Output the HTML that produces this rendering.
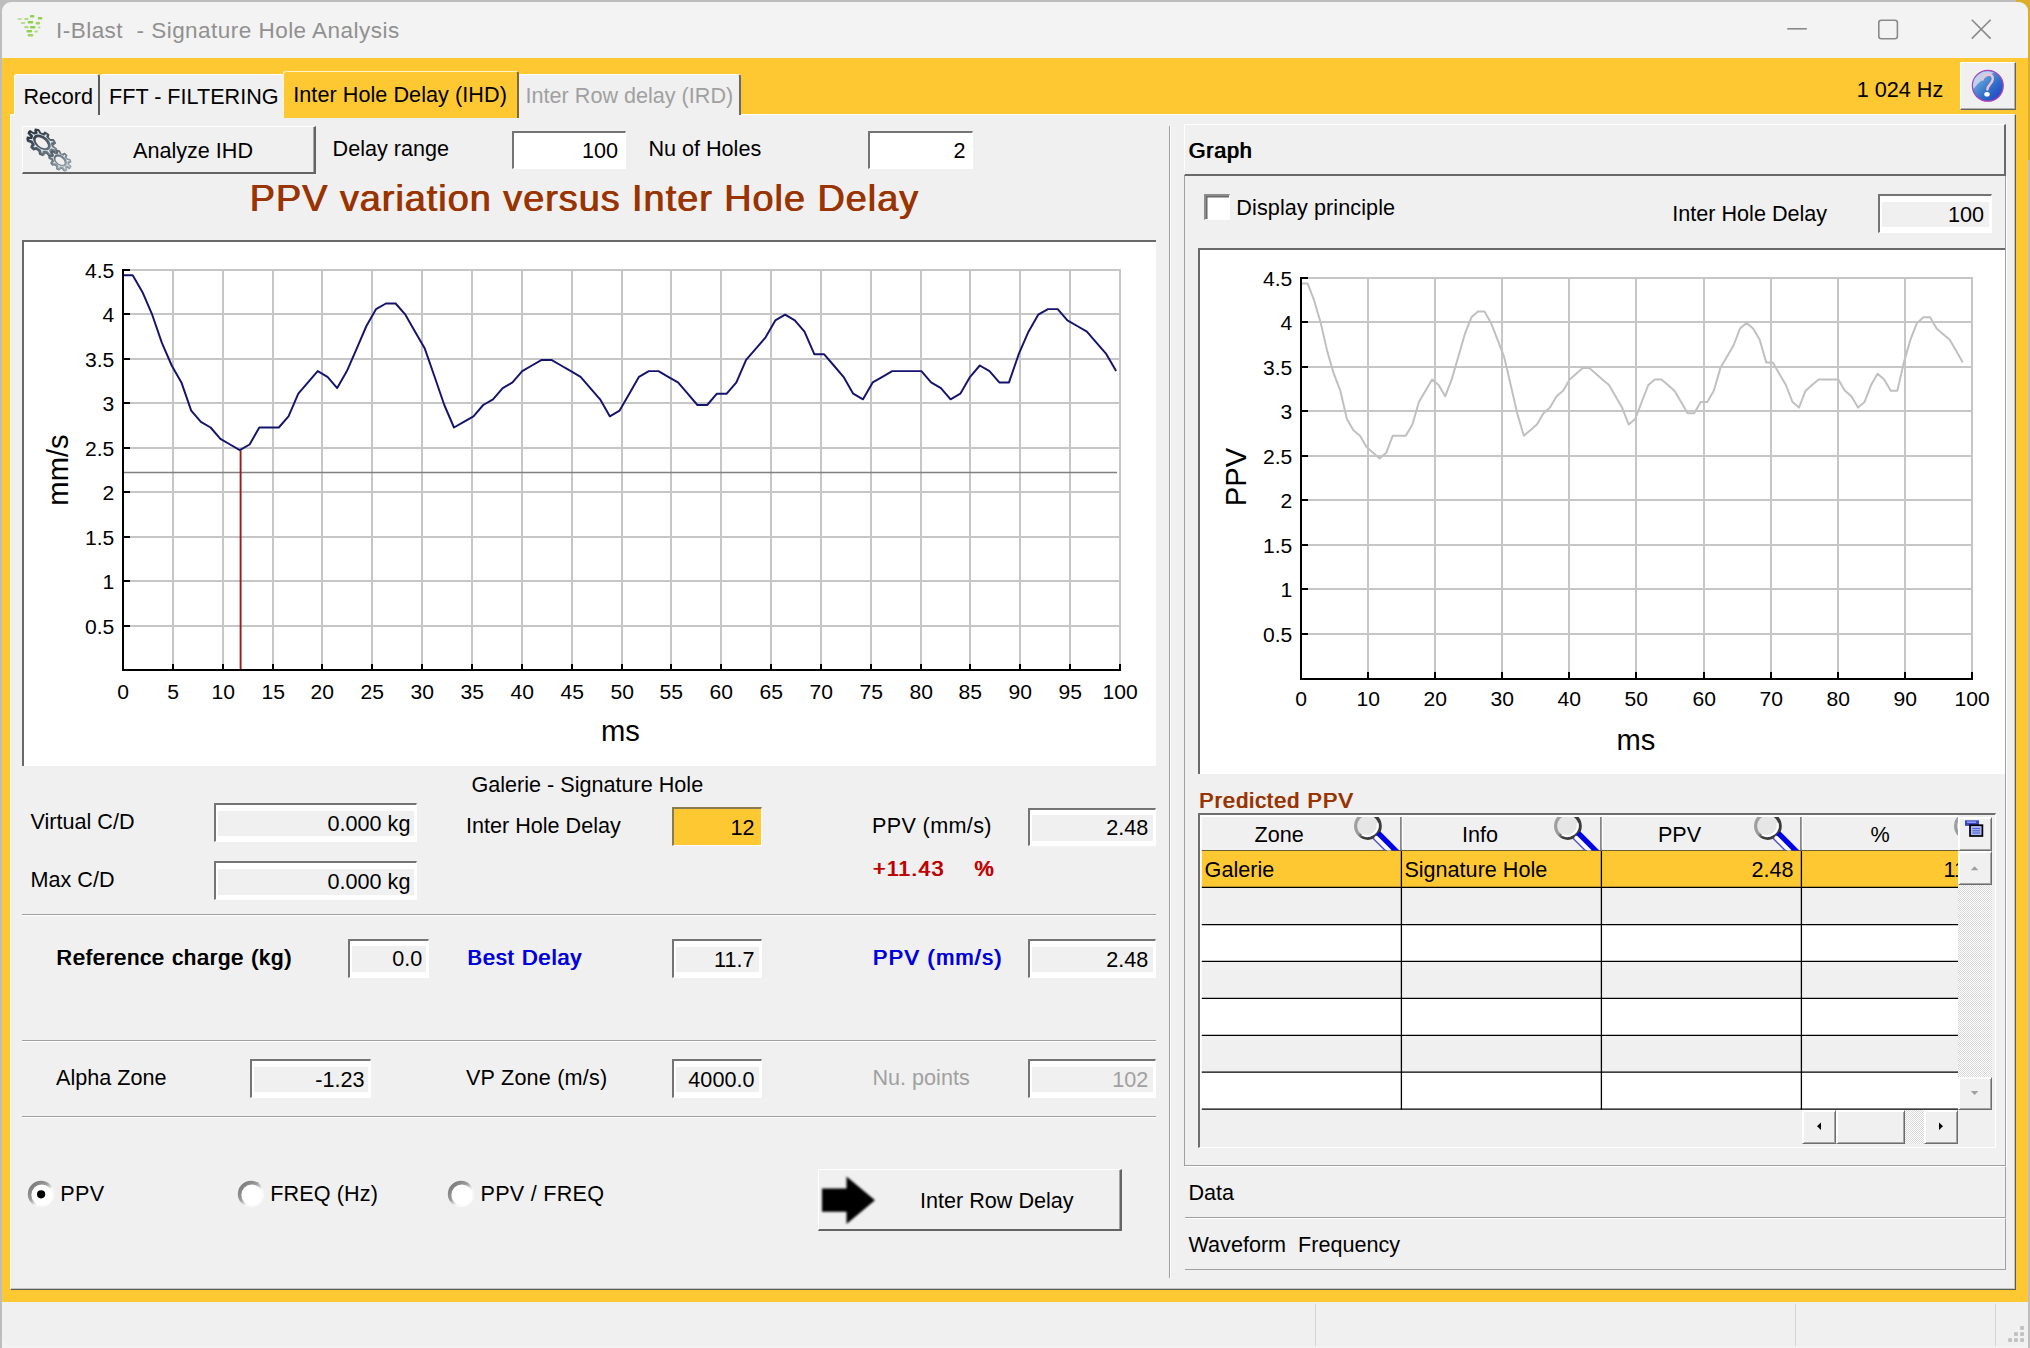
<!DOCTYPE html>
<html>
<head>
<meta charset="utf-8">
<title>I-Blast - Signature Hole Analysis</title>
<style>
*{box-sizing:border-box;margin:0;padding:0}
html,body{width:2030px;height:1348px;overflow:hidden}
body{position:relative;background:#bdbdbd;font-family:"Liberation Sans",sans-serif;font-size:21.6px;color:#000}
.a{position:absolute}
.t{position:absolute;white-space:nowrap;line-height:24px;font-size:21.6px}
.b{font-weight:normal;letter-spacing:1px;text-shadow:1px 0 0 currentColor}
#win{left:2px;top:2px;width:2026px;height:1346px;background:#f3f3f3;border-radius:9px 9px 0 0;overflow:hidden}
.yel{background:#fec832}
.face{background:#f0f0f0}
.inp{position:absolute;background:#fff;border:solid #fff;border-width:2px 1px 1px 2px;border-top-color:#747474;border-left-color:#747474;font-size:21.6px;white-space:nowrap}
.inp span{position:absolute;display:block;left:2px;right:2px;height:25.6px;line-height:25.6px;text-align:right;background:#f0f0f0}
.btn{position:absolute;background:#f0f0f0;border:solid;border-width:1px 2px 2px 1px;border-color:#fff #646464 #646464 #fff;box-shadow:inset -1px 0 0 #a6a6a6}
.hl{position:absolute;height:2px;border-top:1px solid #a0a0a0;border-bottom:1px solid #fff}
</style>
</head>
<body>
<div class="a" style="left:2016px;top:0;width:14px;height:160px;background:#dcae2c"></div>
<div id="win" class="a"></div>
<!-- yellow frame -->
<div class="a yel" style="left:2px;top:58px;width:2026px;height:1244px"></div>
<!-- status bar -->
<div class="a face" style="left:2px;top:1302px;width:2026px;height:44px;border-radius:0 0 9px 9px"></div>
<!-- main panel -->
<div class="a face" id="panel" style="left:10px;top:114px;width:2006px;height:1176px;border:1px solid;border-color:#fff #5e5e50 #5e5e50 #fff;box-shadow:inset -1px -1px 0 #c4c4c4"></div>
<!-- title bar -->
<svg class="a" style="left:14px;top:12px" width="34" height="30" viewBox="0 0 30 30" preserveAspectRatio="none">
<g fill="#8fd14f">
<rect x="3" y="6" width="4" height="2" rx="1" opacity=".55"/><rect x="9" y="6" width="4" height="2" rx="1" opacity=".7"/><rect x="14" y="3" width="4" height="2.4" rx="1"/><rect x="21" y="5" width="4" height="2.4" rx="1"/>
<rect x="6" y="10" width="4" height="2" rx="1" opacity=".6"/><rect x="12" y="9" width="5" height="2.6" rx="1"/><rect x="19" y="10" width="4" height="2.4" rx="1" opacity=".9"/>
<rect x="9" y="14" width="4" height="2.2" rx="1" opacity=".7"/><rect x="14" y="14" width="5" height="2.6" rx="1"/><rect x="21" y="14.5" width="2.5" height="2" rx="1" opacity=".6"/>
<rect x="11" y="18" width="5" height="2.6" rx="1"/><rect x="18" y="18.5" width="3" height="2" rx="1" opacity=".7"/>
<rect x="12" y="22" width="5" height="2.6" rx="1" opacity=".9"/>
</g></svg>
<div class="t" style="left:56px;top:19.4px;font-size:22.5px;letter-spacing:.47px;color:#909090;white-space:pre">I-Blast  - Signature Hole Analysis</div>
<svg class="a" style="left:1780px;top:12px" width="230" height="36" viewBox="0 0 230 36" fill="none" stroke="#8a8a8a" stroke-width="1.6">
<path d="M7.2 16.8H26.8"/>
<rect x="98.8" y="8.2" width="18.6" height="18.6" rx="2.5"/>
<path d="M191.8 7.8L210.6 26.6M210.6 7.8L191.8 26.6"/>
</svg>
<!-- tabs -->
<div class="a face" style="left:14px;top:74px;width:86px;height:41px;border-left:1px solid #fff;border-top:1px solid #fff;border-right:2px solid #5c5c5c;border-radius:3px 3px 0 0"></div>
<div class="a face" style="left:100px;top:74px;width:184px;height:41px;border-top:1px solid #fff;border-radius:3px 3px 0 0"></div>
<div class="a face" style="left:519px;top:74px;width:222px;height:41px;border-top:1px solid #fff;border-right:2px solid #6a6a6a;border-radius:0 3px 0 0"></div>
<div class="a yel" style="left:283px;top:71px;width:236px;height:47px;border-left:1px solid #fff3c8;border-top:1px solid #fff3c8;border-right:2px solid #7d6a3a;border-radius:3px 3px 0 0"></div>
<div class="t" style="left:23.4px;top:84.5px">Record</div>
<div class="t" style="left:109px;top:84.5px">FFT - FILTERING</div>
<div class="t" style="left:293.2px;top:83px;letter-spacing:.06px">Inter Hole Delay (IHD)</div>
<div class="t" style="left:525.6px;top:84.2px;color:#a0a0a0">Inter Row delay (IRD)</div>
<div class="t" style="left:1856.8px;top:78.2px">1 024 Hz</div>
<!-- help button -->
<div class="btn" style="left:1960px;top:62px;width:55.6px;height:47.6px;border-width:1px 1.4px 1.4px 1px;box-shadow:inset -1px -1px 0 #b0b0b0"></div>
<!-- toolbar -->
<div class="btn" style="left:22px;top:126px;width:294px;height:48px"></div>
<svg class="a" style="left:24px;top:128px" width="52" height="44" viewBox="24 128 52 44">
<defs><filter id="gb" x="-10%" y="-10%" width="120%" height="120%"><feGaussianBlur stdDeviation="0.45"/></filter>
<linearGradient id="gs1" x1="0" y1="0" x2="1" y2="1"><stop offset="0" stop-color="#1e2630"/><stop offset=".5" stop-color="#4a545e"/><stop offset="1" stop-color="#8f9aa4"/></linearGradient>
<linearGradient id="gs2" x1="0" y1="0" x2="1" y2="1"><stop offset="0" stop-color="#3a444e"/><stop offset=".5" stop-color="#7a858f"/><stop offset="1" stop-color="#b4bec6"/></linearGradient></defs>
<g filter="url(#gb)">
<g transform="translate(41.2 143.4) rotate(38) scale(1.62 1.0) rotate(-38)"><path d="M7.45 1.51 L9.60 2.80 L8.81 4.73 L6.37 4.15 L4.74 5.94 L5.55 8.32 L3.70 9.29 L2.21 7.27 L-0.19 7.60 L-1.09 9.94 L-3.13 9.50 L-2.98 6.99 L-5.03 5.70 L-7.22 6.91 L-8.50 5.26 L-6.78 3.44 L-7.52 1.13 L-9.98 0.65 L-9.90 -1.44 L-7.40 -1.72 L-6.48 -3.97 L-8.06 -5.91 L-6.66 -7.46 L-4.57 -6.07 L-2.42 -7.21 L-2.38 -9.71 L-0.30 -10.00 L0.41 -7.59 L2.78 -7.07 L4.42 -8.97 L6.19 -7.85 L5.19 -5.55 L6.68 -3.63 L9.15 -4.03 L9.79 -2.03 L7.54 -0.92Z M5.40 0.00 A5.4 5.4 0 1 0 -5.40 0.00 A5.4 5.4 0 1 0 5.40 0.00Z" fill="#5d6872" stroke="#4a545e" stroke-width="1.2" fill-rule="evenodd" stroke-linejoin="round"/></g>
<g transform="translate(42 142.4) rotate(38) scale(1.62 1.0) rotate(-38)"><path d="M7.45 1.51 L9.60 2.80 L8.81 4.73 L6.37 4.15 L4.74 5.94 L5.55 8.32 L3.70 9.29 L2.21 7.27 L-0.19 7.60 L-1.09 9.94 L-3.13 9.50 L-2.98 6.99 L-5.03 5.70 L-7.22 6.91 L-8.50 5.26 L-6.78 3.44 L-7.52 1.13 L-9.98 0.65 L-9.90 -1.44 L-7.40 -1.72 L-6.48 -3.97 L-8.06 -5.91 L-6.66 -7.46 L-4.57 -6.07 L-2.42 -7.21 L-2.38 -9.71 L-0.30 -10.00 L0.41 -7.59 L2.78 -7.07 L4.42 -8.97 L6.19 -7.85 L5.19 -5.55 L6.68 -3.63 L9.15 -4.03 L9.79 -2.03 L7.54 -0.92Z M5.40 0.00 A5.4 5.4 0 1 0 -5.40 0.00 A5.4 5.4 0 1 0 5.40 0.00Z" fill="#dcebf4" stroke="url(#gs1)" stroke-width="1.7" fill-rule="evenodd" stroke-linejoin="round"/></g>
<g transform="translate(59.6 161.2) rotate(38) scale(1.2 0.8) rotate(-30)"><path d="M7.45 1.51 L9.60 2.80 L8.81 4.73 L6.37 4.15 L4.74 5.94 L5.55 8.32 L3.70 9.29 L2.21 7.27 L-0.19 7.60 L-1.09 9.94 L-3.13 9.50 L-2.98 6.99 L-5.03 5.70 L-7.22 6.91 L-8.50 5.26 L-6.78 3.44 L-7.52 1.13 L-9.98 0.65 L-9.90 -1.44 L-7.40 -1.72 L-6.48 -3.97 L-8.06 -5.91 L-6.66 -7.46 L-4.57 -6.07 L-2.42 -7.21 L-2.38 -9.71 L-0.30 -10.00 L0.41 -7.59 L2.78 -7.07 L4.42 -8.97 L6.19 -7.85 L5.19 -5.55 L6.68 -3.63 L9.15 -4.03 L9.79 -2.03 L7.54 -0.92Z M5.40 0.00 A5.4 5.4 0 1 0 -5.40 0.00 A5.4 5.4 0 1 0 5.40 0.00Z" fill="#7f8a94" stroke="#78838d" stroke-width="1.2" fill-rule="evenodd" stroke-linejoin="round"/></g>
<g transform="translate(60.3 160.4) rotate(38) scale(1.2 0.8) rotate(-30)"><path d="M7.45 1.51 L9.60 2.80 L8.81 4.73 L6.37 4.15 L4.74 5.94 L5.55 8.32 L3.70 9.29 L2.21 7.27 L-0.19 7.60 L-1.09 9.94 L-3.13 9.50 L-2.98 6.99 L-5.03 5.70 L-7.22 6.91 L-8.50 5.26 L-6.78 3.44 L-7.52 1.13 L-9.98 0.65 L-9.90 -1.44 L-7.40 -1.72 L-6.48 -3.97 L-8.06 -5.91 L-6.66 -7.46 L-4.57 -6.07 L-2.42 -7.21 L-2.38 -9.71 L-0.30 -10.00 L0.41 -7.59 L2.78 -7.07 L4.42 -8.97 L6.19 -7.85 L5.19 -5.55 L6.68 -3.63 L9.15 -4.03 L9.79 -2.03 L7.54 -0.92Z M5.40 0.00 A5.4 5.4 0 1 0 -5.40 0.00 A5.4 5.4 0 1 0 5.40 0.00Z" fill="#e6eff5" stroke="url(#gs2)" stroke-width="1.7" fill-rule="evenodd" stroke-linejoin="round"/></g>
</g>
</svg>
<div class="t " style="left:133px;top:138.8px;">Analyze IHD</div>
<div class="t " style="left:332.6px;top:136.9px;">Delay range</div>
<div class="inp" style="left:512px;top:131px;width:114px;height:38px;"><span style="top:4.7px;padding-right:5.0px;background:none;">100</span></div>
<div class="t " style="left:648.4px;top:136.9px;">Nu of Holes</div>
<div class="inp" style="left:868px;top:131px;width:105px;height:38px;"><span style="top:4.7px;padding-right:4.5px;background:none;">2</span></div>
<div class="t b" style="left:249.3px;top:176.3px;font-size:37.8px;line-height:44px;letter-spacing:1px;color:#993300">PPV variation versus Inter Hole Delay</div>
<!-- left chart -->
<div class="a" style="left:22px;top:240px;width:1134px;height:526px;background:#fff;border-top:2px solid #696969;border-left:2px solid #696969"></div>
<svg class="a" style="left:0;top:0" width="1170" height="780" viewBox="0 0 1170 780" font-family="Liberation Sans, sans-serif" font-size="21.1">
<path d="M173 269V669M223 269V669M273 269V669M322 269V669M372 269V669M422 269V669M472 269V669M522 269V669M572 269V669M622 269V669M671 269V669M721 269V669M771 269V669M821 269V669M871 269V669M921 269V669M970 269V669M1020 269V669M1070 269V669M1120 269V669M124 626H1121M124 581H1121M124 537H1121M124 492H1121M124 448H1121M124 403H1121M124 359H1121M124 314H1121M124 270H1121" stroke="#c6c6c6" stroke-width="2" fill="none" shape-rendering="crispEdges"/>
<path d="M124 472.5H1117" stroke="#808080" stroke-width="1.5"/>
<path d="M240.6 450.5V669" stroke="#9a1c1c" stroke-width="1.9"/>
<polyline points="123.0,275.3 132.7,275.3 142.5,292.2 152.2,314.7 161.9,342.9 171.7,365.5 181.4,382.4 191.2,410.6 200.9,421.9 210.6,427.5 220.4,438.8 230.1,444.5 239.8,450.1 249.6,444.5 259.3,427.5 269.0,427.5 278.8,427.5 288.5,416.3 298.3,393.7 308.0,382.4 317.7,371.1 327.5,376.8 337.2,388.1 346.9,371.1 356.7,348.6 366.4,326.0 376.1,309.1 385.9,303.5 395.6,303.5 405.4,314.7 415.1,331.7 424.8,348.6 434.6,376.8 444.3,405.0 454.0,427.5 463.8,421.9 473.5,416.3 483.2,405.0 493.0,399.3 502.7,388.1 512.5,382.4 522.2,371.1 531.9,365.5 541.7,359.9 551.4,359.9 561.1,365.5 570.9,371.1 580.6,376.8 590.3,388.1 600.1,399.3 609.8,416.3 619.6,410.6 629.3,393.7 639.0,376.8 648.8,371.1 658.5,371.1 668.2,376.8 678.0,382.4 687.7,393.7 697.4,405.0 707.2,405.0 716.9,393.7 726.7,393.7 736.4,382.4 746.1,359.9 755.9,348.6 765.6,337.3 775.3,320.4 785.1,314.7 794.8,320.4 804.5,331.7 814.3,354.2 824.0,354.2 833.8,365.5 843.5,376.8 853.2,393.7 863.0,399.3 872.7,382.4 882.4,376.8 892.2,371.1 901.9,371.1 911.6,371.1 921.4,371.1 931.1,382.4 940.9,388.1 950.6,399.3 960.3,393.7 970.1,376.8 979.8,365.5 989.5,371.1 999.3,382.4 1009.0,382.4 1018.7,354.2 1028.5,331.7 1038.2,314.7 1048.0,309.1 1057.7,309.1 1067.4,320.4 1077.2,326.0 1086.9,331.7 1096.6,342.9 1106.4,354.2 1116.1,371.1" fill="none" stroke="#14146e" stroke-width="1.95" stroke-linejoin="round"/>
<path d="M123 269V671M122 670H1121M1120 664V669" stroke="#000" stroke-width="2" fill="none" shape-rendering="crispEdges"/>
<path d="M173 664V669M223 664V669M273 664V669M322 664V669M372 664V669M422 664V669M472 664V669M522 664V669M572 664V669M622 664V669M671 664V669M721 664V669M771 664V669M821 664V669M871 664V669M921 664V669M970 664V669M1020 664V669M1070 664V669M1120 664V669M124 626H130M124 581H130M124 537H130M124 492H130M124 448H130M124 403H130M124 359H130M124 314H130M124 270H130" stroke="#000" stroke-width="2" fill="none" shape-rendering="crispEdges"/>
<g text-anchor="middle"><text x="123.2" y="698.8">0</text><text x="173.2" y="698.8">5</text><text x="223.2" y="698.8">10</text><text x="273.2" y="698.8">15</text><text x="322.2" y="698.8">20</text><text x="372.2" y="698.8">25</text><text x="422.2" y="698.8">30</text><text x="472.2" y="698.8">35</text><text x="522.2" y="698.8">40</text><text x="572.2" y="698.8">45</text><text x="622.2" y="698.8">50</text><text x="671.2" y="698.8">55</text><text x="721.2" y="698.8">60</text><text x="771.2" y="698.8">65</text><text x="821.2" y="698.8">70</text><text x="871.2" y="698.8">75</text><text x="921.2" y="698.8">80</text><text x="970.2" y="698.8">85</text><text x="1020.2" y="698.8">90</text><text x="1070.2" y="698.8">95</text><text x="1120.2" y="698.8">100</text></g>
<g text-anchor="end"><text x="114.3" y="633.6">0.5</text><text x="114.3" y="588.6">1</text><text x="114.3" y="544.6">1.5</text><text x="114.3" y="499.6">2</text><text x="114.3" y="455.6">2.5</text><text x="114.3" y="410.6">3</text><text x="114.3" y="366.6">3.5</text><text x="114.3" y="321.6">4</text><text x="114.3" y="277.6">4.5</text></g>
<text x="620.5" y="741" font-size="29.2" text-anchor="middle">ms</text>
<text transform="translate(67.6 470) rotate(-90)" font-size="29.2" text-anchor="middle">mm/s</text>
</svg>
<!-- left form -->
<div class="t " style="left:471.5px;top:772.7px;">Galerie - Signature Hole</div>
<div class="t " style="left:30.5px;top:809.7px;">Virtual C/D</div>
<div class="inp" style="left:214px;top:803px;width:203px;height:39px;"><span style="top:5.9px;padding-right:3.6px;">0.000 kg</span></div>
<div class="t " style="left:30.5px;top:867.6px;">Max C/D</div>
<div class="inp" style="left:214px;top:861px;width:203px;height:39px;"><span style="top:6.1px;padding-right:3.6px;">0.000 kg</span></div>
<div class="t " style="left:466px;top:813.6px;">Inter Hole Delay</div>
<div class="inp" style="left:672px;top:807px;width:90px;height:39px;background:#fec832;border-top-color:#8a7a50;border-left-color:#8a7a50"><span style="top:6.3px;padding-right:4.4px;background:none;">12</span></div>
<div class="t " style="left:872px;top:814.1px;letter-spacing:.35px">PPV (mm/s)</div>
<div class="inp" style="left:1028px;top:808px;width:128px;height:38px;"><span style="top:5.3px;padding-right:4.7px;">2.48</span></div>
<div class="t b" style="left:872.5px;top:856.7px;color:#c00000;letter-spacing:1.1px">+11.43</div>
<div class="t b" style="left:974px;top:856.7px;color:#c00000">%</div>
<div class="hl" style="left:22px;top:914px;width:1134px"></div>
<div class="t b" style="left:56px;top:945.9px;letter-spacing:1px">Reference charge (kg)</div>
<div class="inp" style="left:348px;top:939px;width:81px;height:39px;"><span style="top:5.2px;padding-right:3.7px;">0.0</span></div>
<div class="t b" style="left:467px;top:945.9px;color:#0000dc;letter-spacing:1.05px">Best Delay</div>
<div class="inp" style="left:672px;top:939px;width:90px;height:39px;"><span style="top:5.5px;padding-right:4.6px;">11.7</span></div>
<div class="t b" style="left:872.5px;top:946.0px;color:#0000dc;letter-spacing:1.35px">PPV (mm/s)</div>
<div class="inp" style="left:1028px;top:939px;width:128px;height:39px;"><span style="top:5.5px;padding-right:4.7px;">2.48</span></div>
<div class="hl" style="left:22px;top:1040px;width:1134px"></div>
<div class="t " style="left:56px;top:1065.8px;">Alpha Zone</div>
<div class="inp" style="left:250px;top:1059px;width:121px;height:39px;"><span style="top:5.9px;padding-right:3.6px;">-1.23</span></div>
<div class="t " style="left:466px;top:1065.8px;letter-spacing:.2px">VP Zone (m/s)</div>
<div class="inp" style="left:672px;top:1059px;width:90px;height:39px;"><span style="top:5.5px;padding-right:4.6px;">4000.0</span></div>
<div class="t " style="left:872.5px;top:1065.6px;color:#a0a0a0">Nu. points</div>
<div class="inp" style="left:1028px;top:1059px;width:128px;height:39px;"><span style="top:5.5px;padding-right:4.7px;color:#a0a0a0">102</span></div>
<div class="hl" style="left:22px;top:1116px;width:1134px"></div>
<svg class="a" style="left:27.2px;top:1179.8px" width="28" height="28" viewBox="0 0 28 28"><defs><linearGradient id="rg41" x1="0" y1="0" x2="1" y2="1"><stop offset="0" stop-color="#6a6a6a"/><stop offset=".42" stop-color="#9c9c9c"/><stop offset=".6" stop-color="#f6f6f6"/><stop offset="1" stop-color="#fff"/></linearGradient></defs><circle cx="14" cy="14" r="13.2" fill="url(#rg41)"/><circle cx="14.8" cy="14.9" r="10.4" fill="#fff"/><circle cx="14.1" cy="14.3" r="4.1" fill="#000"/></svg>
<svg class="a" style="left:237.3px;top:1179.8px" width="28" height="28" viewBox="0 0 28 28"><defs><linearGradient id="rg251" x1="0" y1="0" x2="1" y2="1"><stop offset="0" stop-color="#6a6a6a"/><stop offset=".42" stop-color="#9c9c9c"/><stop offset=".6" stop-color="#f6f6f6"/><stop offset="1" stop-color="#fff"/></linearGradient></defs><circle cx="14" cy="14" r="13.2" fill="url(#rg251)"/><circle cx="14.8" cy="14.9" r="10.4" fill="#fff"/></svg>
<svg class="a" style="left:447.0px;top:1179.8px" width="28" height="28" viewBox="0 0 28 28"><defs><linearGradient id="rg461" x1="0" y1="0" x2="1" y2="1"><stop offset="0" stop-color="#6a6a6a"/><stop offset=".42" stop-color="#9c9c9c"/><stop offset=".6" stop-color="#f6f6f6"/><stop offset="1" stop-color="#fff"/></linearGradient></defs><circle cx="14" cy="14" r="13.2" fill="url(#rg461)"/><circle cx="14.8" cy="14.9" r="10.4" fill="#fff"/></svg>
<div class="t " style="left:60.3px;top:1181.8px;letter-spacing:.3px">PPV</div>
<div class="t " style="left:270.3px;top:1181.8px;letter-spacing:.1px">FREQ (Hz)</div>
<div class="t " style="left:480.5px;top:1181.8px;letter-spacing:.25px">PPV / FREQ</div>
<div class="btn" style="left:818px;top:1168.6px;width:304.3px;height:62px"></div>
<svg class="a" style="left:818px;top:1170px" width="62" height="60" viewBox="818 1170 62 60"><defs><filter id="bl"><feGaussianBlur stdDeviation="0.8"/></filter></defs><path d="M822 1188.4H846.5V1176.4L875 1200.2L846.5 1224V1211.8H822Z" fill="#000" filter="url(#bl)"/></svg>
<div class="t " style="left:920px;top:1188.5px;">Inter Row Delay</div>
<div class="a" style="left:1169px;top:126px;width:2px;height:1152px;border-left:1px solid #a0a0a0;border-right:1px solid #fff"></div>
<svg class="a" style="left:1968px;top:66px" width="40" height="40" viewBox="1968 66 40 40">
<defs><linearGradient id="hg" x1="0" y1="0" x2="1" y2="1"><stop offset="0" stop-color="#9cc0e8"/><stop offset=".42" stop-color="#4a8ad2"/><stop offset=".6" stop-color="#2f6cc8"/><stop offset="1" stop-color="#2238c4"/></linearGradient>
<filter id="hb"><feGaussianBlur stdDeviation="0.5"/></filter></defs>
<g filter="url(#hb)">
<circle cx="1987.8" cy="85.8" r="15.4" fill="url(#hg)" stroke="#b040b8" stroke-width="1.3"/>
<path d="M1973.4 89A14.6 14.6 0 0 1 1994 72.8Q1982 78 1973.4 89Z" fill="#cfe0f4" opacity=".8"/>
<path d="M1982.6 79.6Q1983.2 74.6 1988 74.4Q1993 74.6 1992.8 79Q1992.6 82 1989.6 84.8Q1987.4 87 1987.4 89.6" fill="none" stroke="#ecc4d2" stroke-width="2.5" stroke-linecap="round"/>
<ellipse cx="1987" cy="94.2" rx="2.7" ry="2.3" fill="#fff"/>
</g>
</svg>
<div class="a" style="left:1184px;top:124px;width:822px;height:52px;border:solid;border-width:1px 2px 2px 1px;border-color:#fff #696969 #696969 #fff"></div>
<div class="t b" style="left:1188.2px;top:138.9px;letter-spacing:.75px">Graph</div>
<div class="a" style="left:1184px;top:176px;width:822px;height:990px;border:1px solid #a0a0a0;border-top:none;box-shadow:1px 1px 0 #fff"></div>
<div class="a" style="left:1204px;top:194px;width:26px;height:26px;background:#fff;border:solid;border-width:2px 1px 1px 2px;border-color:#8c8c8c #fff #fff #8c8c8c;box-shadow:inset 1.5px 1.5px 0 #696969"></div>
<div class="t " style="left:1236.3px;top:195.6px;letter-spacing:.1px">Display principle</div>
<div class="t " style="left:1672.3px;top:201.5px;">Inter Hole Delay</div>
<div class="inp" style="left:1878px;top:194px;width:114px;height:39px;"><span style="top:5.7px;padding-right:5.0px;">100</span></div>
<div class="a" style="left:1198px;top:248px;width:806.5px;height:526px;background:#fff;border-top:2px solid #696969;border-left:2px solid #696969"></div>
<svg class="a" style="left:1190px;top:240px" width="820" height="540" viewBox="1190 240 820 540" font-family="Liberation Sans, sans-serif" font-size="21.1">
<path d="M1368 277V678M1435 277V678M1502 277V678M1569 277V678M1636 277V678M1704 277V678M1771 277V678M1838 277V678M1905 277V678M1972 277V678M1302 634H1973M1302 589H1973M1302 545H1973M1302 500H1973M1302 456H1973M1302 411H1973M1302 367H1973M1302 322H1973M1302 278H1973" stroke="#c6c6c6" stroke-width="2" fill="none" shape-rendering="crispEdges"/>
<polyline points="1301.0,283.4 1307.6,283.4 1314.1,300.3 1320.7,322.9 1327.2,351.1 1333.8,373.7 1340.3,390.7 1346.9,418.9 1353.4,430.2 1360.0,435.8 1366.5,447.1 1373.1,452.8 1379.6,458.4 1386.2,452.8 1392.7,435.8 1399.3,435.8 1405.8,435.8 1412.4,424.5 1418.9,402.0 1425.5,390.7 1432.1,379.4 1438.6,385.0 1445.2,396.3 1451.7,379.4 1458.3,356.8 1464.8,334.2 1471.4,317.3 1477.9,311.6 1484.5,311.6 1491.0,322.9 1497.6,339.8 1504.1,356.8 1510.7,385.0 1517.2,413.3 1523.8,435.8 1530.3,430.2 1536.9,424.5 1543.5,413.3 1550.0,407.6 1556.6,396.3 1563.1,390.7 1569.7,379.4 1576.2,373.7 1582.8,368.1 1589.3,368.1 1595.9,373.7 1602.4,379.4 1609.0,385.0 1615.5,396.3 1622.1,407.6 1628.6,424.5 1635.2,418.9 1641.7,402.0 1648.3,385.0 1654.8,379.4 1661.4,379.4 1668.0,385.0 1674.5,390.7 1681.1,402.0 1687.6,413.3 1694.2,413.3 1700.7,402.0 1707.3,402.0 1713.8,390.7 1720.4,368.1 1726.9,356.8 1733.5,345.5 1740.0,328.5 1746.6,322.9 1753.1,328.5 1759.7,339.8 1766.2,362.4 1772.8,362.4 1779.3,373.7 1785.9,385.0 1792.5,402.0 1799.0,407.6 1805.6,390.7 1812.1,385.0 1818.7,379.4 1825.2,379.4 1831.8,379.4 1838.3,379.4 1844.9,390.7 1851.4,396.3 1858.0,407.6 1864.5,402.0 1871.1,385.0 1877.6,373.7 1884.2,379.4 1890.7,390.7 1897.3,390.7 1903.9,362.4 1910.4,339.8 1917.0,322.9 1923.5,317.3 1930.1,317.3 1936.6,328.5 1943.2,334.2 1949.7,339.8 1956.3,351.1 1962.8,362.4" fill="none" stroke="#c0c0c0" stroke-width="2" stroke-linejoin="round"/>
<path d="M1301 277V680M1300 679H1973M1972 672V678" stroke="#000" stroke-width="2" fill="none" shape-rendering="crispEdges"/>
<path d="M1368 672V678M1435 672V678M1502 672V678M1569 672V678M1636 672V678M1704 672V678M1771 672V678M1838 672V678M1905 672V678M1972 672V678M1302 634H1308M1302 589H1308M1302 545H1308M1302 500H1308M1302 456H1308M1302 411H1308M1302 367H1308M1302 322H1308M1302 278H1308" stroke="#000" stroke-width="2" fill="none" shape-rendering="crispEdges"/>
<g text-anchor="middle"><text x="1301.2" y="706.4">0</text><text x="1368.2" y="706.4">10</text><text x="1435.2" y="706.4">20</text><text x="1502.2" y="706.4">30</text><text x="1569.2" y="706.4">40</text><text x="1636.2" y="706.4">50</text><text x="1704.2" y="706.4">60</text><text x="1771.2" y="706.4">70</text><text x="1838.2" y="706.4">80</text><text x="1905.2" y="706.4">90</text><text x="1972.2" y="706.4">100</text></g>
<g text-anchor="end"><text x="1292.3" y="641.6">0.5</text><text x="1292.3" y="596.6">1</text><text x="1292.3" y="552.6">1.5</text><text x="1292.3" y="507.6">2</text><text x="1292.3" y="463.6">2.5</text><text x="1292.3" y="418.6">3</text><text x="1292.3" y="374.6">3.5</text><text x="1292.3" y="329.6">4</text><text x="1292.3" y="285.6">4.5</text></g>
<text x="1636" y="749.5" font-size="29.2" text-anchor="middle">ms</text>
<text transform="translate(1246 477) rotate(-90)" font-size="29.2" text-anchor="middle">PPV</text>
</svg>
<div class="t b" style="left:1198.8px;top:788.8px;color:#993300;letter-spacing:1.1px">Predicted PPV</div>
<div class="a" style="left:1198px;top:813px;width:798px;height:335px;border:solid;border-width:2px 1px 1px 2px;border-color:#6e6e6e #fff #fff #6e6e6e"></div>
<div class="a" style="left:1200px;top:815px;width:758px;height:36px;border-top:2px solid #fff;border-bottom:1.3px solid #6b6030"></div>
<svg class="a" style="left:1200px;top:815px" width="800" height="335" viewBox="1200 815 800 335" font-family="Liberation Sans, sans-serif" font-size="21.6">
<rect x="1200" y="851" width="758" height="36.4" fill="#fec832"/><rect x="1200" y="887.4" width="758" height="37.2" fill="#f0f0f0"/><rect x="1200" y="924.6" width="758" height="36.8" fill="#fff"/><rect x="1200" y="961.4" width="758" height="37.0" fill="#f0f0f0"/><rect x="1200" y="998.4" width="758" height="36.9" fill="#fff"/><rect x="1200" y="1035.3" width="758" height="36.9" fill="#f0f0f0"/><rect x="1200" y="1072.2" width="758" height="37.0" fill="#fff"/><path d="M1200 887.4H1958" stroke="#000" stroke-width="1.2"/><path d="M1200 924.6H1958" stroke="#000" stroke-width="1.2"/><path d="M1200 961.4H1958" stroke="#000" stroke-width="1.2"/><path d="M1200 998.4H1958" stroke="#000" stroke-width="1.2"/><path d="M1200 1035.3H1958" stroke="#000" stroke-width="1.2"/><path d="M1200 1072.2H1958" stroke="#000" stroke-width="1.2"/><path d="M1200 1109.2H1958" stroke="#000" stroke-width="1.2"/><path d="M1401 817V850" stroke="#6e6e6e" stroke-width="1.6"/><path d="M1402.4 817V849" stroke="#fff" stroke-width="1.2"/><path d="M1401.4 851V1109.6" stroke="#000" stroke-width="1.3"/><path d="M1601 817V850" stroke="#6e6e6e" stroke-width="1.6"/><path d="M1602.4 817V849" stroke="#fff" stroke-width="1.2"/><path d="M1601.4 851V1109.6" stroke="#000" stroke-width="1.3"/><path d="M1801 817V850" stroke="#6e6e6e" stroke-width="1.6"/><path d="M1802.4 817V849" stroke="#fff" stroke-width="1.2"/><path d="M1801.4 851V1109.6" stroke="#000" stroke-width="1.3"/><defs><clipPath id="hc"><rect x="1200" y="817" width="758" height="33.5"/></clipPath><linearGradient id="mg" x1="0" y1="0" x2="1" y2="0.6"><stop offset="0" stop-color="#a4a4a4"/><stop offset=".45" stop-color="#9a9a9a"/><stop offset=".62" stop-color="#3c3c3c"/><stop offset="1" stop-color="#3c3c3c"/></linearGradient></defs><g clip-path="url(#hc)"><g transform="translate(1367.9 826)"><circle cx="0" cy="0" r="12.3" fill="#e6e6e6" stroke="url(#mg)" stroke-width="3.2"/><path d="M-6 8.5A10.5 10.5 0 0 0 9.5 -3" fill="none" stroke="#fff" stroke-width="2.2"/><path d="M10.4 7.2L29.6 26.4" stroke="#0000e6" stroke-width="5.2"/><path d="M7.2 10.6L25 28.4" stroke="#fff" stroke-width="2.8"/><path d="M5 12.2L22.4 29.6" stroke="#5252c8" stroke-width="1.4"/></g><g transform="translate(1567.9 826)"><circle cx="0" cy="0" r="12.3" fill="#e6e6e6" stroke="url(#mg)" stroke-width="3.2"/><path d="M-6 8.5A10.5 10.5 0 0 0 9.5 -3" fill="none" stroke="#fff" stroke-width="2.2"/><path d="M10.4 7.2L29.6 26.4" stroke="#0000e6" stroke-width="5.2"/><path d="M7.2 10.6L25 28.4" stroke="#fff" stroke-width="2.8"/><path d="M5 12.2L22.4 29.6" stroke="#5252c8" stroke-width="1.4"/></g><g transform="translate(1767.9 826)"><circle cx="0" cy="0" r="12.3" fill="#e6e6e6" stroke="url(#mg)" stroke-width="3.2"/><path d="M-6 8.5A10.5 10.5 0 0 0 9.5 -3" fill="none" stroke="#fff" stroke-width="2.2"/><path d="M10.4 7.2L29.6 26.4" stroke="#0000e6" stroke-width="5.2"/><path d="M7.2 10.6L25 28.4" stroke="#fff" stroke-width="2.8"/><path d="M5 12.2L22.4 29.6" stroke="#5252c8" stroke-width="1.4"/></g><g transform="translate(1967.9 826)"><circle cx="0" cy="0" r="12.3" fill="#e6e6e6" stroke="url(#mg)" stroke-width="3.2"/><path d="M-6 8.5A10.5 10.5 0 0 0 9.5 -3" fill="none" stroke="#fff" stroke-width="2.2"/><path d="M10.4 7.2L29.6 26.4" stroke="#0000e6" stroke-width="5.2"/><path d="M7.2 10.6L25 28.4" stroke="#fff" stroke-width="2.8"/><path d="M5 12.2L22.4 29.6" stroke="#5252c8" stroke-width="1.4"/></g></g><text x="1279.2" y="842.0" text-anchor="middle">Zone</text><text x="1480" y="842.0" text-anchor="middle">Info</text><text x="1679.5" y="842.0" text-anchor="middle">PPV</text><text x="1880" y="842.0" text-anchor="middle">%</text><text x="1204.6" y="877.0">Galerie</text><text x="1404.4" y="877.0">Signature Hole</text><text x="1793.5" y="877.0" text-anchor="end">2.48</text><svg x="1801" y="851" width="157" height="36" viewBox="1801 851 157 36"><text x="1943.6" y="877.0">11.43</text></svg><defs><pattern id="dz" width="2" height="2" patternUnits="userSpaceOnUse"><rect width="2" height="2" fill="#fff"/><rect width="1" height="1" fill="#d8d8d8"/><rect x="1" y="1" width="1" height="1" fill="#d8d8d8"/></pattern></defs><rect x="1958" y="885" width="34" height="192" fill="url(#dz)"/><rect x="1904" y="1110" width="21" height="34" fill="url(#dz)"/><rect x="1200" y="817" width="1.8" height="293" fill="#fff"/></svg>
<div class="a" style="left:1958px;top:817px;width:34px;height:34px;background:#f0f0f0;border:solid;border-width:1px;border-color:#fff #6e6e6e #6e6e6e #fff;box-shadow:inset 1px 1px 0 #fff,inset -1px -1px 0 #a4a4a4"></div>
<div class="a" style="left:1958px;top:851px;width:34px;height:34px;background:#f0f0f0;border:solid;border-width:1px;border-color:#fff #6e6e6e #6e6e6e #fff;box-shadow:inset 1px 1px 0 #fff,inset -1px -1px 0 #a4a4a4"></div>
<div class="a" style="left:1958px;top:1076.5px;width:34px;height:33.5px;background:#f0f0f0;border:solid;border-width:1px;border-color:#fff #6e6e6e #6e6e6e #fff;box-shadow:inset 1px 1px 0 #fff,inset -1px -1px 0 #a4a4a4"></div>
<div class="a" style="left:1802px;top:1110px;width:33.5px;height:34px;background:#f0f0f0;border:solid;border-width:1px;border-color:#fff #6e6e6e #6e6e6e #fff;box-shadow:inset 1px 1px 0 #fff,inset -1px -1px 0 #a4a4a4"></div>
<div class="a" style="left:1835.5px;top:1110px;width:69.09999999999991px;height:34px;background:#f0f0f0;border:solid;border-width:1px;border-color:#fff #6e6e6e #6e6e6e #fff;box-shadow:inset 1px 1px 0 #fff,inset -1px -1px 0 #a4a4a4"></div>
<div class="a" style="left:1924.3px;top:1110px;width:33.700000000000045px;height:34px;background:#f0f0f0;border:solid;border-width:1px;border-color:#fff #6e6e6e #6e6e6e #fff;box-shadow:inset 1px 1px 0 #fff,inset -1px -1px 0 #a4a4a4"></div>
<svg class="a" style="left:1800px;top:815px" width="200" height="335" viewBox="1800 815 200 335">
<path d="M1970.8 870.2L1974.6 866.2L1978.4 870.2Z" fill="#a0a0a0"/>
<path d="M1970.8 1091L1974.6 1095L1978.4 1091Z" fill="#a0a0a0"/>
<path d="M1821 1122.6V1130L1817 1126.3Z" fill="#000"/>
<path d="M1939 1122.6V1130L1943 1126.3Z" fill="#000"/>
<rect x="1965" y="820.3" width="14" height="5.6" fill="#3a48c8"/><rect x="1967" y="821.5" width="9" height="1.4" fill="#9aa6ee"/>
<rect x="1970" y="825.2" width="12.4" height="10.8" fill="#a9b6f2" stroke="#000" stroke-width="1.7"/>
<path d="M1972.4 828.6H1980M1972.4 830.8H1980M1972.4 833H1980" stroke="#4a5ad0" stroke-width="1"/>
</svg>
<div class="a" style="left:1185px;top:1166px;width:821px;height:52px;border-top:1px solid #fff;border-bottom:1px solid #a0a0a0;border-right:1px solid #a0a0a0"></div>
<div class="a" style="left:1185px;top:1218px;width:821px;height:52px;border-top:1px solid #fff;border-bottom:1px solid #a0a0a0;border-right:1px solid #a0a0a0"></div>
<div class="t " style="left:1188.5px;top:1180.5px;">Data</div>
<div class="t " style="left:1188.5px;top:1233.0px;">Waveform&nbsp; Frequency</div>
<div class="a" style="left:1315px;top:1304px;width:1px;height:42px;background:#d4d4d4"></div>
<div class="a" style="left:1795px;top:1304px;width:1px;height:42px;background:#d4d4d4"></div>
<div class="a" style="left:1995px;top:1304px;width:1px;height:42px;background:#d4d4d4"></div>
<svg class="a" style="left:2006px;top:1324px" width="20" height="20" viewBox="2006 1324 20 20" fill="#bfbfbf"><rect x="2020.2" y="1326.1" width="3.7" height="3.7"/><rect x="2014.1" y="1332.2" width="3.7" height="3.7"/><rect x="2020.2" y="1332.2" width="3.7" height="3.7"/><rect x="2008.2" y="1338.2" width="3.7" height="3.7"/><rect x="2014.1" y="1338.2" width="3.7" height="3.7"/><rect x="2020.2" y="1338.2" width="3.7" height="3.7"/></svg>
</body>
</html>
